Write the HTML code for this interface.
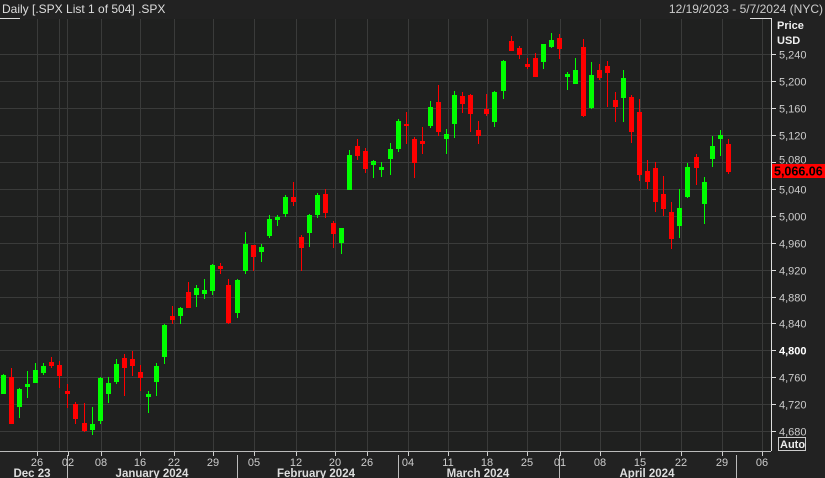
<!DOCTYPE html>
<html><head><meta charset="utf-8"><style>
html,body{margin:0;padding:0;background:#222;width:825px;height:478px;overflow:hidden}
svg{display:block}
text{font-family:"Liberation Sans Narrow","Liberation Sans",sans-serif}
</style></head><body>
<svg id="s" width="825" height="478" xmlns="http://www.w3.org/2000/svg">
<rect x="0" y="0" width="825" height="478" fill="#222"/>
<rect x="0" y="19" width="771" height="432" fill="#1f201f"/>
<g id="grid" stroke="#3a3b3a" stroke-width="1"></g>
<g id="candles"></g>
<line x1="0" y1="18.5" x2="20" y2="18.5" stroke="#ddd"/>
<line x1="750" y1="18.5" x2="771" y2="18.5" stroke="#ddd"/>
<line x1="771.5" y1="18" x2="771.5" y2="451" stroke="#ddd"/>
<line x1="0" y1="451.5" x2="771" y2="451.5" stroke="#bbb"/>
<g id="axis"></g>
<text x="2" y="13" font-size="12" fill="#ddd">Daily [.SPX List 1 of 504] .SPX</text>
<text x="823" y="13" font-size="12" fill="#ccc" text-anchor="end">12/19/2023 - 5/7/2024 (NYC)</text>
<text x="777" y="29" font-size="11" fill="#eee" font-weight="bold">Price</text>
<text x="777" y="44" font-size="11" fill="#eee" font-weight="bold">USD</text>
<rect x="772" y="164" width="53" height="14" fill="#f00"/>
<text x="774" y="175.5" font-size="12.5" fill="#000" font-weight="bold">5,066.06</text>
<rect x="778.5" y="437.5" width="27" height="13" fill="#222" stroke="#ccc"/>
<text x="780" y="448" font-size="11" fill="#eee" font-weight="bold">Auto</text>
</svg>
<script>
var NS="http://www.w3.org/2000/svg";
function el(p,t,a,txt){var e=document.createElementNS(NS,t);for(var k in a)e.setAttribute(k,a[k]);if(txt)e.textContent=txt;var par=document.getElementById(p);if(p=='axis2'){par=document.getElementById('axis');}par.appendChild(e);return e;}
var vx=[37,59,67,101,140,174,213,254,296,335,367,408,448,487,527,560,600,640,681,722,762];
vx.forEach(function(x){el('grid','line',{x1:x+.5,y1:19,x2:x+.5,y2:451});});
for(var p=4680;p<=5240;p+=40){var y=Math.round(162+(5080-p)*0.6725)+.5;
 el('grid','line',{x1:0,y1:y,x2:771,y2:y});
 el('axis','line',{x1:771,y1:y,x2:776,y2:y,stroke:'#ddd'});
 var lbl=(p+'').replace(/^(\d)/,'$1,');
 if(p!=5080) el('axis','text',{x:779,y:y+4,'font-size':11,fill:p==4800?'#fff':'#ccc','font-weight':p==4800?'bold':'normal'},lbl);
 else el('axis','text',{x:779,y:y+1,'font-size':11,fill:'#ccc'},lbl);
}
var ticks=[[37,'26'],[68,'02'],[101,'08'],[140,'16'],[174,'22'],[213,'29'],[254,'05'],[296,'12'],[335,'20'],[367,'26'],[408,'04'],[448,'11'],[487,'18'],[527,'25'],[560,'01'],[600,'08'],[640,'15'],[681,'22'],[722,'29'],[762,'06']];
ticks.forEach(function(t){el('axis','line',{x1:t[0]+.5,y1:452,x2:t[0]+.5,y2:456,stroke:'#ccc'});
 el('axis','text',{x:t[0],y:466,'font-size':11,fill:'#ccc','text-anchor':'middle'},t[1]);});
[67,237,398,559,736].forEach(function(x){el('axis','line',{x1:x+.5,y1:455,x2:x+.5,y2:478,stroke:'#bbb'});});
[[32,'Dec 23'],[152,'January 2024'],[316,'February 2024'],[478,'March 2024'],[647,'April 2024']].forEach(function(m){
 el('axis','text',{x:m[0],y:477,'font-size':11.5,fill:'#ddd','font-weight':'bold','text-anchor':'middle'},m[1]);});
var C=[[3,375,393,374,393,1],[11,377,423,368,423,0],[19,389,406,388,417,1],[27,384,386,371,397,1],[35,370,382,363,382,1],[43,366,372,363,374,1],[51,362,365,357,367,0],[59,365,375,361,387,0],[67,391,393,384,407,0],[75,404,418,402,423,0],[84,423,430,403,431,0],[92,424,429,407,434,1],[100,378,420,377,423,1],[108,383,393,377,402,1],[116,364,381,359,383,1],[124,358,367,354,395,0],[132,359,365,351,375,0],[140,372,377,365,390,0],[148,394,396,391,412,1],[156,366,381,363,395,1],[164,325,356,324,363,1],[172,316,319,306,323,0],[180,308,315,307,323,1],[188,292,307,282,307,0],[196,288,294,285,306,1],[204,290,293,279,298,1],[212,265,290,264,294,1],[220,266,268,263,273,0],[228,285,322,279,323,0],[237,280,312,279,317,1],[245,244,270,232,273,1],[253,245,256,245,270,0],[261,247,251,244,261,1],[269,219,235,215,237,1],[277,217,219,215,225,1],[285,197,213,195,216,1],[293,197,201,182,205,0],[301,237,247,235,270,0],[309,215,232,214,246,1],[317,195,214,193,217,1],[325,194,212,189,217,0],[333,223,233,221,247,0],[341,228,242,228,253,1],[349,155,189,150,189,1],[357,146,155,139,159,0],[365,151,168,148,172,0],[373,161,164,160,177,1],[381,167,169,162,176,1],[390,149,158,143,174,1],[398,121,148,119,151,1],[406,124,125,112,143,0],[414,139,162,137,177,0],[422,141,143,127,153,0],[430,107,125,101,127,1],[438,102,131,85,135,0],[446,134,138,129,153,1],[454,95,123,91,137,1],[462,96,103,92,112,0],[470,95,113,94,131,0],[478,130,135,121,143,0],[486,109,113,94,115,0],[494,92,121,91,126,1],[503,61,90,60,98,1],[511,41,50,36,50,0],[519,48,54,46,58,0],[527,64,66,58,68,0],[535,58,76,53,76,0],[543,44,61,44,68,1],[551,40,46,33,47,1],[559,38,48,34,58,0],[567,74,76,72,89,1],[575,70,83,58,83,1],[583,47,115,39,116,0],[591,75,107,62,108,1],[599,70,77,64,79,0],[607,66,72,61,106,0],[615,100,106,92,121,0],[623,78,97,70,121,1],[631,97,131,95,142,0],[639,112,174,99,180,0],[647,171,181,160,188,0],[655,168,201,162,211,0],[663,194,208,176,215,0],[671,212,238,202,248,0],[679,208,225,189,237,1],[687,167,196,163,197,1],[696,157,167,154,184,0],[704,182,203,177,223,1],[712,146,158,136,166,1],[720,135,138,130,155,1],[728,144,171,139,173,0]];
C.forEach(function(c){var col=c[5]?'#0f0':'#f00';
 el('candles','rect',{x:c[0],y:c[3],width:1,height:c[4]-c[3]+1,fill:col});
 el('candles','rect',{x:c[0]-2,y:c[1],width:5,height:Math.max(2,c[2]-c[1]+1),fill:col});});
var s=document.getElementById('s');
</script>
</body></html>
